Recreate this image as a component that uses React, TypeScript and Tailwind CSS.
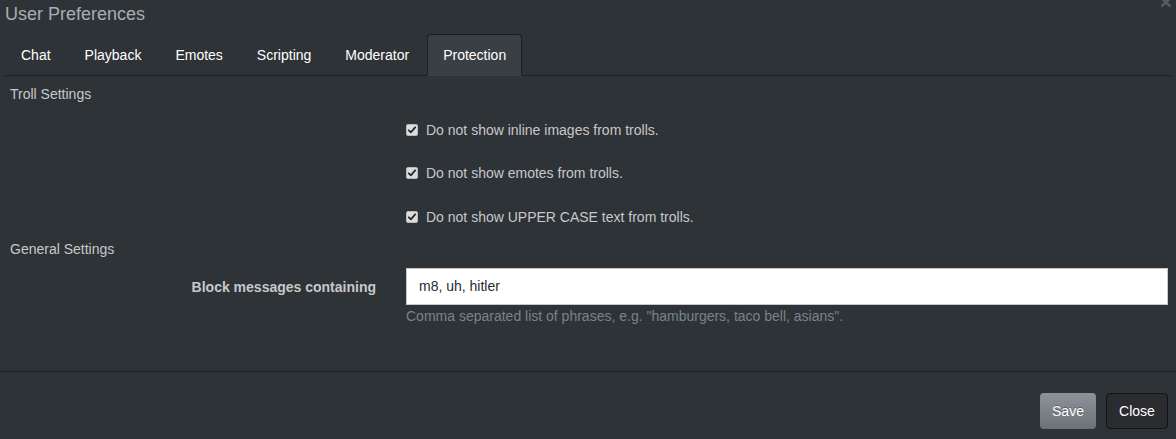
import { useState } from 'react'

const TABS = ['Chat', 'Playback', 'Emotes', 'Scripting', 'Moderator', 'Protection']

const TROLL_OPTIONS = [
  'Do not show inline images from trolls.',
  'Do not show emotes from trolls.',
  'Do not show UPPER CASE text from trolls.',
]

function CheckBox({ checked, onClick }: { checked: boolean; onClick: () => void }) {
  return (
    <span
      onClick={onClick}
      className="w-[12px] h-[12px] rounded-[2px] bg-[#dcdcdc] border border-[#b8b8b8] flex items-center justify-center cursor-pointer"
    >
      {checked && (
        <svg viewBox="0 0 12 12" className="w-[10px] h-[10px]">
          <path d="M2.2 6.4 L4.6 8.8 L9.8 2.8" fill="none" stroke="#2b2b2b" strokeWidth="2.2" strokeLinecap="round" strokeLinejoin="round" />
        </svg>
      )}
    </span>
  )
}

export default function App() {
  const [tab, setTab] = useState('Protection')
  const [checks, setChecks] = useState([true, true, true])
  const [block, setBlock] = useState('m8, uh, hitler')

  return (
    <div className="relative h-[439px] w-full bg-[#2e3338] text-[14px] text-[#c8c8c8] overflow-hidden" style={{ fontFamily: '"Liberation Sans", Arial, sans-serif' }}>
      <button className="absolute right-[4px] top-[-9px] text-[21px] font-bold leading-none text-white opacity-20">×</button>

      <div className="h-[34px] px-[5px] pt-[3px]">
        <h4 className="text-[18px] leading-[22px] text-[#a9adb1]">User Preferences</h4>
      </div>

      <ul className="mx-[5px] flex border-b border-[#1c1e22]">
        {TABS.map(t => (
          <li key={t} className="mr-[2px] -mb-px">
            <button
              onClick={() => setTab(t)}
              className={`block px-[15px] py-[10px] leading-5 text-white rounded-t-[4px] border ${
                tab === t ? 'bg-[#3a3f44] border-[#1c1e22] border-b-transparent' : 'border-transparent'
              }`}
            >
              {t}
            </button>
          </li>
        ))}
      </ul>

      <div className="px-[10px] pt-[8px] leading-5">Troll Settings</div>

      <div className="pt-[4px]">
        {TROLL_OPTIONS.map((o, i) => (
          <div key={o} className="h-[43.5px] flex items-center">
            <div className="w-[406px]" />
            <label className="flex items-center gap-[8px] leading-5">
              <CheckBox checked={checks[i]} onClick={() => setChecks(c => c.map((v, j) => (j === i ? !v : v)))} />
              <span>{o}</span>
            </label>
          </div>
        ))}
      </div>

      <div className="px-[10px] leading-5">General Settings</div>

      <div className="flex mt-[9px]">
        <label className="w-[391px] pr-[15px] text-right font-bold leading-5 pt-[9px]">Block messages containing</label>
        <div className="flex-1 pl-[15px] pr-[8px]">
          <input
            value={block}
            onChange={e => setBlock(e.target.value)}
            className="w-full h-[37px] bg-white border border-[#c8c8c8] px-[12px] text-[14px] text-[#272b30] outline-none"
          />
          <p className="mt-px leading-5 text-[#7a8288]">Comma separated list of phrases, e.g. "hamburgers, taco bell, asians".</p>
        </div>
      </div>

      <div className="absolute left-0 right-0 top-[371px] border-t border-[#1c1e22]">
        <div className="flex justify-end gap-[10px] pr-[8px] pt-[21px]">
          <button className="w-[56px] h-[36px] rounded-[4px] text-white bg-gradient-to-b from-[#8d9398] to-[#6c7278] [text-shadow:0_-1px_0_rgba(0,0,0,0.3)]">
            Save
          </button>
          <button className="w-[62px] h-[36px] rounded-[4px] text-white bg-[#2a2c2f] border border-[#121314]">
            Close
          </button>
        </div>
      </div>
    </div>
  )
}
